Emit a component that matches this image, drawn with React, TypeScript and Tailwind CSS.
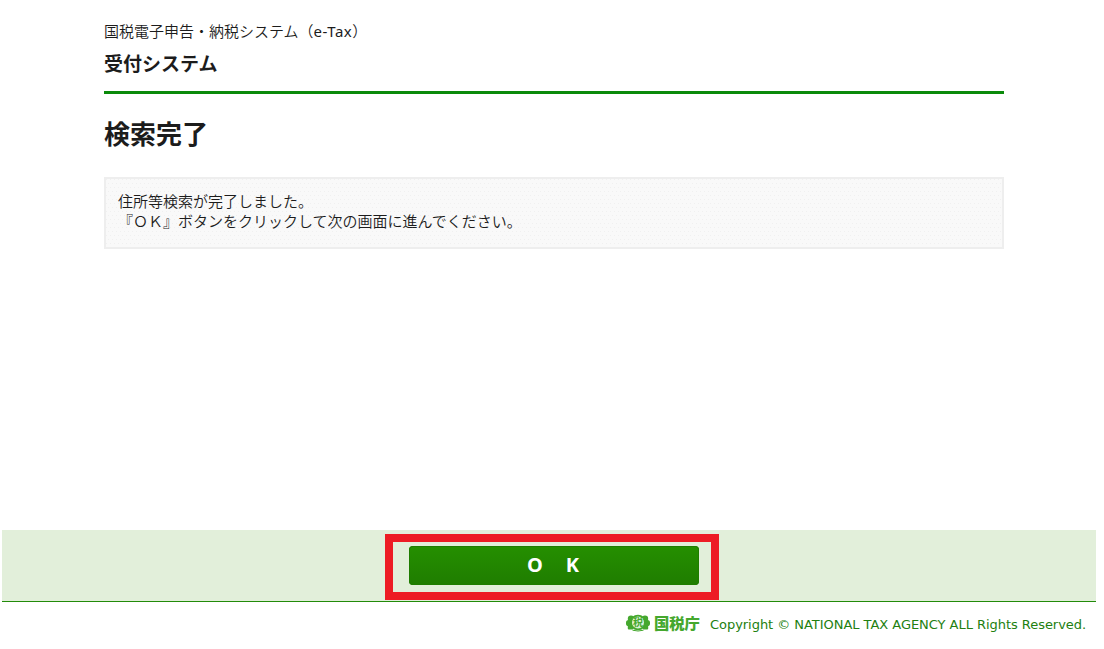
function NtaMark() {
  return (
    <svg width="24" height="18" viewBox="0 0 24 18" fill="none" className="shrink-0">
      <g fill="#45a82e">
        <circle cx="5" cy="4.8" r="3.2" />
        <circle cx="19" cy="4.8" r="3.2" />
        <rect x="0" y="6" width="7" height="6" rx="2.6" />
        <rect x="17" y="6" width="7" height="6" rx="2.6" />
        <rect x="1.8" y="10" width="5.4" height="5.6" rx="1" />
        <rect x="16.8" y="10" width="5.4" height="5.6" rx="1" />
        <ellipse cx="12" cy="8.5" rx="8.2" ry="7.8" />
      </g>
      <circle cx="12" cy="8.5" r="6" fill="#dff1d9" />
      <text x="12" y="12.2" textAnchor="middle" fill="#45a82e" className="text-[10px] font-bold">
        税
      </text>
      <path d="M6.5 16.2q5.5 1.6 11 0" stroke="#45a82e" strokeWidth="1" />
    </svg>
  )
}

export default function App() {
  return (
    <div className="flex h-[649px] w-[1104px] flex-col overflow-hidden bg-white font-['Noto_Sans','Noto_Sans_CJK_JP',sans-serif] text-[#1c1c1c]">
      <div className="ml-[104px] w-[900px] grow">
        <header className="h-[94px] border-b-3 border-[#0a8a0a] pt-[21px]">
          <p className="text-[15px] leading-5 font-[350]">
            国税電子申告・納税システム（<span className="font-normal tracking-[0.5px]">e-Tax</span>）
          </p>
          <p className="mt-[9px] text-[19px] leading-7 font-bold">受付システム</p>
        </header>

        <h1 className="mt-5 text-[26px] leading-10 font-bold">検索完了</h1>

        <div className="mt-[23px] h-[72px] border-2 border-[#eee] bg-[#f9f9f9] bg-[radial-gradient(circle_at_0.5px_0.5px,#f0f0f0_0.6px,transparent_0.6px),radial-gradient(circle_at_2.5px_4.5px,#f0f0f0_0.6px,transparent_0.6px)] bg-size-[4px_8px] px-3 pt-3 text-[15px] leading-5 font-[350]">
          <p>住所等検索が完了しました。</p>
          <p>『ＯＫ』ボタンをクリックして次の画面に進んでください。</p>
        </div>
      </div>

      <div className="ml-0.5 h-[72px] w-[1094px] border-b border-[#228b0a] bg-[#e2efda] pt-1">
        {/* 強調枠 */}
        <div className="ml-[383px] h-[66px] w-[334px] border-8 border-[#ed1c24] pt-1 pl-4">
          <button className="flex h-[39px] w-[290px] items-center justify-center gap-[23px] rounded bg-linear-to-b from-[#258f00] to-[#1f7d00] pr-0.5 pb-0.5 text-[20px] font-bold text-white shadow-[inset_0_0_0_1px_#1f7d00]">
            <span>O</span>
            <span>K</span>
          </button>
        </div>
      </div>

      <footer className="flex h-[47px] items-start pt-3 pl-[626px] text-[13px] text-[#228010]">
        <NtaMark />
        <span className="mt-[-1px] ml-1 w-[46px] text-[15.3px] leading-5 font-black whitespace-nowrap text-[#45a82e]">
          国税庁
        </span>
        <span className="mt-px ml-[10px] font-['DejaVu_Sans',sans-serif] leading-5 tracking-[-0.04px] whitespace-nowrap">
          Copyright © NATIONAL TAX AGENCY ALL Rights Reserved.
        </span>
      </footer>
    </div>
  )
}
